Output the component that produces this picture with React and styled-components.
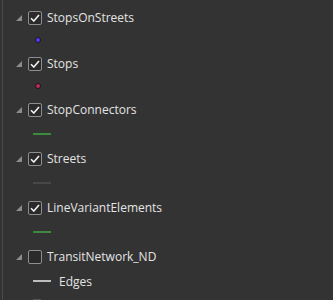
import React from "react";
import styled, { createGlobalStyle } from "styled-components";

const GlobalStyle = createGlobalStyle`
  html, body {
    margin: 0;
    padding: 0;
    background: #333333;
  }
`;

const layers = [
  { name: "StopsOnStreets", checked: true, symbol: { kind: "dot", color: "#6236f0" } },
  { name: "Stops", checked: true, symbol: { kind: "dot", color: "#c22a62" } },
  { name: "StopConnectors", checked: true, symbol: { kind: "line", color: "#3c8a3c" } },
  { name: "Streets", checked: true, symbol: { kind: "line", color: "#484848" } },
  { name: "LineVariantElements", checked: true, symbol: { kind: "line", color: "#3c8a3c" } },
];

function App() {
  return (
    <>
      <GlobalStyle />
      <Panel>
        {layers.map((layer) => (
          <Layer key={layer.name}>
            <Header>
              <Expander />
              <CheckBox>
                {layer.checked && <CheckMark />}
              </CheckBox>
              <Label>{layer.name}</Label>
            </Header>
            <SymbolRow $kind={layer.symbol.kind}>
              {layer.symbol.kind === "dot" ? (
                <Dot $color={layer.symbol.color} />
              ) : (
                <LineSwatch $color={layer.symbol.color} />
              )}
            </SymbolRow>
          </Layer>
        ))}
        <Layer>
          <Header>
            <Expander />
            <CheckBox />
            <Label>TransitNetwork_ND</Label>
          </Header>
          <SubItem>
            <LineSwatch $color="#bdbdbd" />
            <SubLabel>Edges</SubLabel>
          </SubItem>
          <SubItem>
            <BoxSwatch />
          </SubItem>
        </Layer>
      </Panel>
    </>
  );
}

function CheckMark() {
  return (
    <svg width="10" height="8" viewBox="0 0 10 8">
      <path d="M1 4.2 L3.8 7 L9 1" fill="none" stroke="#f2f2f2" strokeWidth="1.6" />
    </svg>
  );
}

const Panel = styled.div`
  width: 333px;
  height: 300px;
  overflow: hidden;
  box-sizing: border-box;
  padding-top: 6px;
  margin-left: 2px;
  border-left: 1px solid #4a4a4a;
  background: #333333;
  font-family: "Open Sans", "Liberation Sans", sans-serif;
`;

const Layer = styled.div`
  display: flex;
  flex-direction: column;
`;

const Header = styled.div`
  height: 23px;
  display: flex;
  align-items: center;
  padding-left: 13px;
`;

const Expander = styled.span`
  width: 0;
  height: 0;
  border-left: 6px solid transparent;
  border-bottom: 6px solid #8c8c8c;
  margin-right: 6px;
  margin-top: 1px;
`;

const CheckBox = styled.span`
  width: 12px;
  height: 12px;
  border: 1px solid #8e8e8e;
  border-radius: 2px;
  background: #2a2a2a;
  display: flex;
  align-items: center;
  justify-content: center;
  margin-right: 5px;
`;

const Label = styled.span`
  color: #e4e4e4;
  font-size: 12px;
  line-height: 16px;
`;

const SymbolRow = styled.div`
  height: ${(p) => (p.$kind === "dot" ? "23px" : "26px")};
  display: flex;
  align-items: flex-start;
  padding-left: 30px;
  padding-top: ${(p) => (p.$kind === "dot" ? "8px" : "12px")};
  box-sizing: border-box;
`;

const Dot = styled.span`
  width: 4px;
  height: 4px;
  border-radius: 50%;
  background: ${(p) => p.$color};
  border: 1px solid #151515;
  margin-left: 2px;
`;

const LineSwatch = styled.span`
  width: 18px;
  height: 2px;
  background: ${(p) => p.$color};
`;

const SubItem = styled.div`
  height: 26px;
  display: flex;
  align-items: center;
  padding-left: 30px;
  gap: 8px;
`;

const SubLabel = styled.span`
  color: #e4e4e4;
  font-size: 12px;
`;

const BoxSwatch = styled.span`
  align-self: flex-start;
  width: 8px;
  height: 8px;
  background: #555555;
  margin-top: 5px;
`;

export default App;
